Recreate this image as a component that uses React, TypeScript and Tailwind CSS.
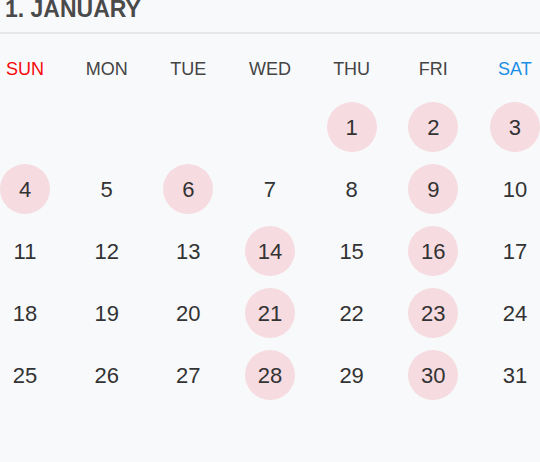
const WEEKDAYS = ["SUN", "MON", "TUE", "WED", "THU", "FRI", "SAT"];

// highlighted days in January
const MARKED = new Set([1, 2, 3, 4, 6, 9, 14, 16, 21, 23, 28, 30]);

// January starts on a Thursday (index 4)
const OFFSET = 4;

function buildWeeks() {
  const cells: (number | null)[] = [];
  for (let i = 0; i < OFFSET; i++) cells.push(null);
  for (let d = 1; d <= 31; d++) cells.push(d);
  while (cells.length % 7 !== 0) cells.push(null);
  const weeks: (number | null)[][] = [];
  for (let i = 0; i < cells.length; i += 7) weeks.push(cells.slice(i, i + 7));
  return weeks;
}

function DayCell({ day }: { day: number | null }) {
  if (day === null) return <div className="w-[50px] h-[50px]" />;
  return (
    <div
      className={
        MARKED.has(day)
          ? "w-[50px] h-[50px] rounded-full bg-[#f6dbe0] flex items-center justify-center text-[22px] text-[#333333]"
          : "w-[50px] h-[50px] rounded-full flex items-center justify-center text-[22px] text-[#333333]"
      }
    >
      {day}
    </div>
  );
}

export default function App() {
  const weeks = buildWeeks();

  return (
    <div
      className="w-[540px] h-[462px] overflow-hidden bg-[#f8f9fb]"
      style={{ fontFamily: '"Liberation Sans", Arial, sans-serif' }}
    >
      <div className="h-[34px] border-b-2 border-[#e6e8eb] px-[5px]">
        <h1 className="text-[23px] leading-[18px] font-bold text-[#4a4a4a]">
          1. JANUARY
        </h1>
      </div>

      <div className="h-[62px] pt-[9px] flex items-center justify-between">
        {WEEKDAYS.map((name, i) => (
          <div
            key={name}
            className={
              i === 0
                ? "w-[50px] text-center text-[18px] text-[#f50a0a]"
                : i === 6
                  ? "w-[50px] text-center text-[18px] text-[#1b8fe6]"
                  : "w-[50px] text-center text-[18px] text-[#444444]"
            }
          >
            {name}
          </div>
        ))}
      </div>

      <div className="flex flex-col">
        {weeks.map((week, wi) => (
          <div key={wi} className="h-[62px] flex items-center justify-between">
            {week.map((day, di) => (
              <DayCell key={di} day={day} />
            ))}
          </div>
        ))}
      </div>
    </div>
  );
}
